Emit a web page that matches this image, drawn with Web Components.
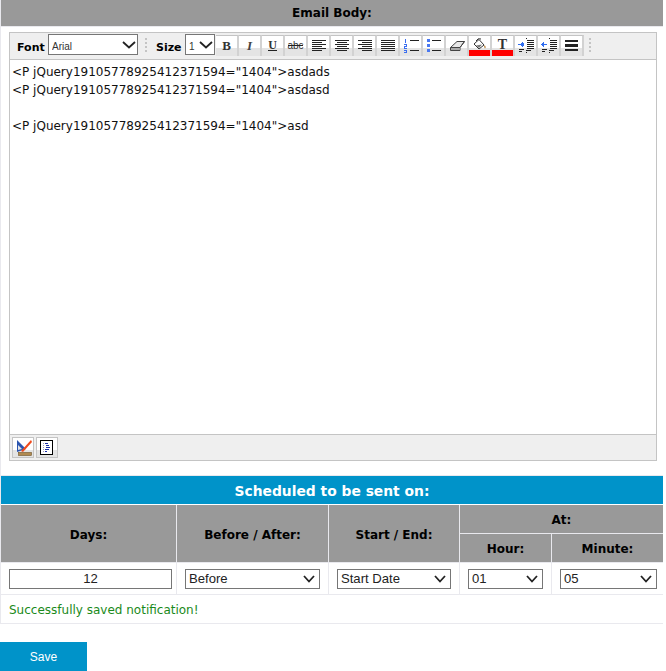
<!DOCTYPE html>
<html>
<head>
<meta charset="utf-8">
<title>Email Body</title>
<style>
   html, body { margin: 0; padding: 0; background: #fff; }
   body { width: 666px; height: 671px; overflow: hidden; font-family: 'DejaVu Sans', Verdana, sans-serif; }
</style>
</head>
<body>
<wc-notification>
   <wc-section-title>Email Body:</wc-section-title>
   <wc-editor>&lt;P jQuery19105778925412371594="1404"&gt;asdads
&lt;P jQuery19105778925412371594="1404"&gt;asdasd

&lt;P jQuery19105778925412371594="1404"&gt;asd</wc-editor>
   <wc-schedule></wc-schedule>
</wc-notification>
<wc-save-button>Save</wc-save-button>

<script>
// ICONS, 21x21 boxes drawn on the button
const ruled = (rows) => `<g transform="translate(1 0)">` + rows.map(([x, y, w, h, c]) => `<rect x="${x}" y="${y}" width="${w}" height="${h || 1}" fill="${c || '#222'}"/>`).join('') + `</g>`

const blue = '#3b6ef0'
const icons = {
   bold: `<text x="10.5" y="13.5" text-anchor="middle" font-family="Liberation Serif" font-weight="700" font-size="13" fill="#333">B</text>`,
   italic: `<text x="10.5" y="13.5" text-anchor="middle" font-family="Liberation Serif" font-style="italic" font-weight="700" font-size="13" fill="#444">I</text>`,
   underline: `<text x="10.5" y="12.5" text-anchor="middle" font-family="Liberation Serif" font-weight="700" font-size="12" fill="#333">U</text><rect x="6" y="14" width="9" height="1" fill="#222"/>`,
   strike: `<text x="10.5" y="12.5" text-anchor="middle" font-family="Liberation Sans" font-size="10" fill="#333">abc</text><rect x="3" y="9" width="15" height="1" fill="#222"/>`,
   left: ruled([[3,4,14],[3,6,10],[3,8,14],[3,10,10],[3,12,14],[3,14,10]]),
   center: ruled([[3,4,14],[5,6,10],[3,8,14],[5,10,10],[3,12,14],[5,14,10]]),
   right: ruled([[3,4,14],[7,6,10],[3,8,14],[7,10,10],[3,12,14],[7,14,10]]),
   justify: ruled([[3,4,14],[3,6,14],[3,8,14],[3,10,14],[3,12,14],[3,14,14]]),
   ol: ruled([[4,3,1,4,blue],[3,8,3,1,blue],[5,9,1,1,blue],[3,10,3,1,blue],[3,11,1,1,blue],[3,12,3,1,blue],[3,14,3,1,blue],[5,15,1,1,blue],[3,16,3,1,blue],[9,4,9],[9,14,9]]),
   ul: ruled([[3,3,3,3,'#4a78f0'],[3,8,3,3,'#4a78f0'],[3,13,3,3,'#4a78f0'],[8,4,9],[8,14,9]]),
   eraser: `<path d="M4.5 11.5 L11 5.5 H18.5 L14 11.5 V14.5 H4.5 Z" fill="#e8e8e8" stroke="#444"/><path d="M4.5 11.5 H14 L18.5 5.5" fill="none" stroke="#444"/><path d="M5 12 H13.5 V14 H5 Z" fill="#aaa"/>`,
   fill: `<path d="M5 8 L10 3.5 L15 9 L10 13 Z" fill="#fff" stroke="#333"/><path d="M7 5 Q9 1.5 12 3" fill="none" stroke="#333"/><path d="M7 9.5 L13 8.5 L10 12 Z" fill="#777"/><path d="M15.5 9 Q17.5 11 16 12.5 Q14.5 11 15.5 9 Z" fill="#b07a30"/><rect x="0" y="14" width="21" height="6" fill="#f00"/>`,
   color: `<text x="10.5" y="12.5" text-anchor="middle" font-family="Liberation Serif" font-weight="700" font-size="14" fill="#333">T</text><rect x="0" y="14" width="21" height="6" fill="#f00"/>`,
   indent: ruled([[10,2,1,1],[11,4,7],[11,6,7],[11,8,7],[11,10,7],[11,12,7],[10,14,5],[10,16,1,1],[2,8,6,1,'#2f6df0'],[6,6,1,5,'#2f6df0'],[5,7,1,3,'#2f6df0'],[7,7,1,3,'#2f6df0'],[3,13,5],[3,15,3]]),
   outdent: ruled([[10,2,1,1],[11,4,7],[11,6,7],[11,8,7],[11,10,7],[11,12,7],[10,14,5],[10,16,1,1],[2,8,6,1,'#2f6df0'],[3,7,1,3,'#2f6df0'],[4,6,1,5,'#2f6df0'],[3,13,5],[3,15,3]]),
   rule: ruled([[3,4,13,2],[3,8,13,3],[3,13,13,2]]),
   design: `<path d="M4 2 L13 11 L4 14 Z" fill="#2b55b0"/><path d="M5 7 L9 11 L5 12 Z" fill="#e4e4e4"/><rect x="5.5" y="14.5" width="13" height="3" fill="#b08a50" stroke="#6d5228" stroke-width=".6"/><path d="M8 13 L18 2 L19 4 L10 14 Z" fill="#f04a1c"/>`,
   source: `<rect x="3.5" y="2.5" width="12" height="14" fill="#fff" stroke="#000"/><g transform="translate(-1 0)">${ruled([[6,5,1,1,'#99b'],[6,7,1,1,'#99b'],[6,9,1,1,'#99b'],[6,11,1,1,'#99b'],[6,13,1,1,'#99b'],[8,5,3,1,'#1a2fa8'],[9,7,3,1,'#1a2fa8'],[9,9,4,1,'#1a2fa8'],[8,11,4,1,'#1a2fa8'],[8,13,2,1,'#1a2fa8']])}</g>`
}

const chevron = (w, h, sw) => `url("data:image/svg+xml,%3Csvg xmlns='http://www.w3.org/2000/svg' width='${w}' height='${h}'%3E%3Cpath d='M1 1 L${w / 2} ${h - 1.5} L${w - 1} 1' fill='none' stroke='%23222' stroke-width='${sw}'/%3E%3C/svg%3E")`

// TOOL BUTTON
const templateTool = document.createElement('template')
templateTool.innerHTML = `
<style>
   :host { display: block; width: 23px; height: 21px; box-sizing: border-box; border-top: 1px solid #c4c4c4; border-right: 2px solid #d2d2d2; background: linear-gradient(#fff 0, #fff 12px, #e4e4e4 12px, #e4e4e4 100%); overflow: hidden; }
   :host([boxed]) { width: 22px; border: 1px solid #c4c4c4; }
   svg { display: block; width: 21px; height: 21px; }
</style>
<svg viewBox="0 0 21 21" role="img"></svg>
`

class ToolButton extends HTMLElement {
   constructor() {
      super()
      this.attachShadow({ mode: 'open' })
      this.shadowRoot.appendChild(templateTool.content.cloneNode(true))
   }

   connectedCallback() {
      this.shadowRoot.querySelector('svg').innerHTML = icons[this.getAttribute('icon')] ?? ''
   }
}

// PAGE BLOCK
const templatePage = document.createElement('template')
templatePage.innerHTML = `
<style>
   :host { display: block; border-left: 1px solid #e9e9ee; width: 662px; }
</style>
<slot></slot>
`

class Notification extends HTMLElement {
   constructor() {
      super()
      this.attachShadow({ mode: 'open' })
      this.shadowRoot.appendChild(templatePage.content.cloneNode(true))
   }
}

// TITLE BAR
const templateTitle = document.createElement('template')
templateTitle.innerHTML = `
<style>
   :host { display: block; height: 26px; background: #999; border-bottom: 1px solid #e9e9ee; text-align: center; font: bold 12px/27px 'DejaVu Sans', Verdana, sans-serif; color: #000; }
</style>
<slot></slot>
`

class SectionTitle extends HTMLElement {
   constructor() {
      super()
      this.attachShadow({ mode: 'open' })
      this.shadowRoot.appendChild(templateTitle.content.cloneNode(true))
   }
}

// EDITOR
const templateEditor = document.createElement('template')
templateEditor.innerHTML = `
<style>
   :host { display: block; box-sizing: border-box; width: 648px; height: 429px; margin: 5px 0 0 8px; border: 1px solid #c4c4c4; background: #fff; font-family: 'DejaVu Sans', Verdana, sans-serif; }
   .wrap { display: flex; flex-direction: column; height: 100%; }
   .bar { flex: none; display: flex; align-items: flex-start; box-sizing: border-box; height: 27px; padding: 2px 0 0 7px; background: #efefef; border-bottom: 1px solid #c4c4c4; }
   .bar label { font-size: 11px; font-weight: bold; color: #000; line-height: 25px; }
   .bar select { appearance: none; box-sizing: border-box; height: 21px; margin: -1px 0 0; padding: 3px 0 0 3px; border: 1px solid #767676; border-radius: 0; background: #fff no-repeat right 1px center; font: 10px 'Liberation Sans', sans-serif; color: #333; }
   .font-label { width: 31px; }
   .size-label { width: 29px; }
   .font { width: 90px; }
   .size { width: 30px; margin-right: 1px !important; }
   .tools { display: flex; }
   .grip { width: 2px; height: 15px; margin: 3px 9px 0 7px; background: repeating-linear-gradient(#c4c4c4 0, #c4c4c4 2px, transparent 2px, transparent 4px); }
   .end { margin-left: 5px; }
   .body { flex: 1; margin: 0; padding: 3px 2px; white-space: pre-wrap; font: 12px/18px 'DejaVu Sans', Verdana, sans-serif; color: #111; overflow: hidden; }
   .foot { flex: none; display: flex; gap: 2px; box-sizing: border-box; height: 26px; padding: 2px 0 0 2px; background: #efefef; border-top: 1px solid #c4c4c4; }
</style>
<div class="wrap">
   <div class="bar">
      <label class="font-label">Font</label>
      <select class="font"><option>Arial</option></select>
      <span class="grip"></span>
      <label class="size-label">Size</label>
      <select class="size"><option>1</option></select>
      <span class="tools"></span>
      <span class="grip end"></span>
   </div>
   <pre class="body"><slot></slot></pre>
   <div class="foot"></div>
</div>
`

class Editor extends HTMLElement {
   constructor() {
      super()
      this.attachShadow({ mode: 'open' })
      this.shadowRoot.appendChild(templateEditor.content.cloneNode(true))
   }

   connectedCallback() {
      const names = ['bold', 'italic', 'underline', 'strike', 'left', 'center', 'right', 'justify', 'ol', 'ul', 'eraser', 'fill', 'color', 'indent', 'outdent', 'rule']
      this.shadowRoot.querySelector('.tools').innerHTML = names.map(n => `<wc-tool icon="${n}"></wc-tool>`).join('')
      this.shadowRoot.querySelector('.foot').innerHTML = ['design', 'source'].map(n => `<wc-tool boxed icon="${n}"></wc-tool>`).join('')
      this.shadowRoot.querySelectorAll('select').forEach(s => { s.style.backgroundImage = chevron(14, 8, 1.8) })
   }
}

// SCHEDULE GRID
const templateSchedule = document.createElement('template')
templateSchedule.innerHTML = `
<style>
   :host { display: block; margin-top: 14px; font-family: 'DejaVu Sans', Verdana, sans-serif; }
   .title { height: 28px; line-height: 30px; background: #0093c9; border-top: 1px solid #e9e9ee; color: #fff; font-size: 13.85px; font-weight: bold; text-align: center; margin-bottom: 1px; }
   .grid { display: grid; grid-template-columns: 175px 151px 130px 91px 111px; grid-template-rows: 28px 28px 31px; column-gap: 1px; row-gap: 1px; background: #e9e9ee; border-bottom: 1px solid #e9e9ee; }
   .h { background: #999; color: #000; font-size: 12px; font-weight: bold; display: flex; align-items: center; justify-content: center; padding-top: 2px; box-sizing: border-box; }
   .sub { padding-top: 1px; }
   .tall { grid-row: span 2; }
   .wide { grid-column: span 2; }
   .c { background: #fff; display: flex; align-items: center; justify-content: center; padding-top: 1px; box-sizing: border-box; }
   input, select { box-sizing: border-box; height: 20px; margin: 0; border: 1px solid #767676; border-radius: 0; background-color: #fff; font: 13.1px 'Liberation Sans', sans-serif; color: #222; }
   select { appearance: none; padding: 0 0 1px 3px; background-repeat: no-repeat; background-position: right 4px center; }
   input { text-align: center; padding: 0 2px 1px; }
   .msg { height: 28px; line-height: 30px; padding-left: 8px; font-size: 12px; color: #1a8a1a; border-bottom: 1px solid #e9e9ee; background: #fff; }
</style>
<div class="title">Scheduled to be sent on:</div>
<div class="grid">
   <div class="h tall">Days:</div>
   <div class="h tall">Before / After:</div>
   <div class="h tall">Start / End:</div>
   <div class="h wide">At:</div>
   <div class="h sub">Hour:</div>
   <div class="h sub">Minute:</div>
   <div class="c"><input type="text" value="12" style="width:163px;margin-left:4px"></div>
   <div class="c"><select style="width:135px"><option>Before</option></select></div>
   <div class="c"><select style="width:114px"><option>Start Date</option></select></div>
   <div class="c"><select style="width:75px"><option>01</option></select></div>
   <div class="c"><select style="width:97px;margin-left:2px"><option>05</option></select></div>
</div>
<div class="msg">Successfully saved notification!</div>
`

class Schedule extends HTMLElement {
   constructor() {
      super()
      this.attachShadow({ mode: 'open' })
      this.shadowRoot.appendChild(templateSchedule.content.cloneNode(true))
   }

   connectedCallback() {
      this.shadowRoot.querySelectorAll('select').forEach(s => { s.style.backgroundImage = chevron(12, 8, 1.8) })
   }
}

// SAVE BUTTON
const templateSave = document.createElement('template')
templateSave.innerHTML = `
<style>
   :host { display: block; width: 87px; height: 29px; margin-top: 18px; background: #0093c9; color: #fff; font: 12px/30px 'Liberation Sans', sans-serif; text-align: center; }
</style>
<slot></slot>
`

class SaveButton extends HTMLElement {
   constructor() {
      super()
      this.attachShadow({ mode: 'open' })
      this.shadowRoot.appendChild(templateSave.content.cloneNode(true))
   }
}

// Register the elements
function register() {
   window.customElements.define('wc-tool', ToolButton)
   window.customElements.define('wc-notification', Notification)
   window.customElements.define('wc-section-title', SectionTitle)
   window.customElements.define('wc-editor', Editor)
   window.customElements.define('wc-schedule', Schedule)
   window.customElements.define('wc-save-button', SaveButton)
}

register()
</script>
</body>
</html>
